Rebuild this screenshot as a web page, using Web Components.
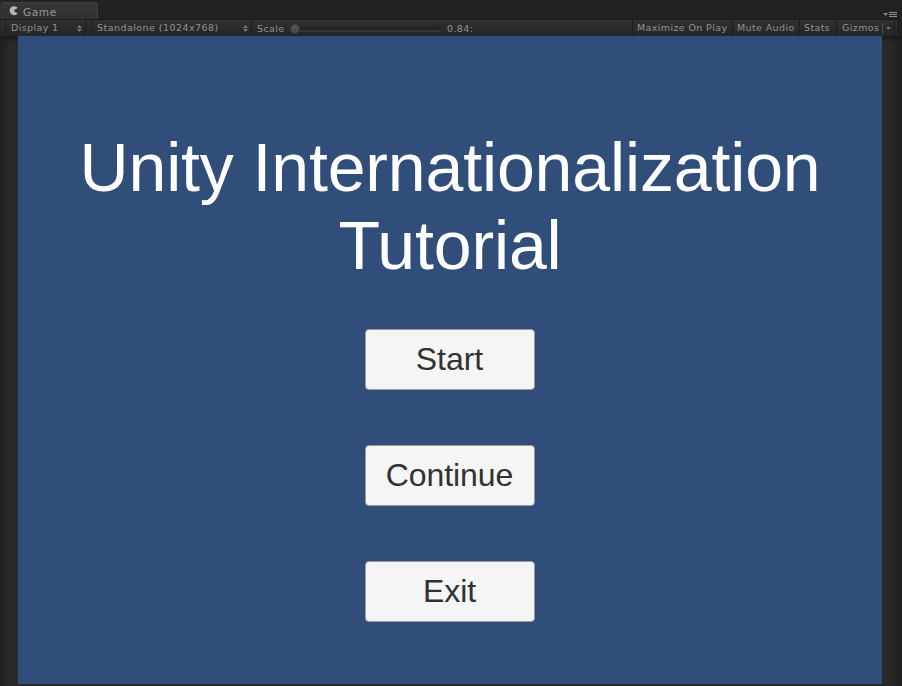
<!DOCTYPE html>
<html lang="en"><head><meta charset="utf-8"><title>Game</title>
<style>html,body{margin:0;height:100%;overflow:hidden;background:#222}</style></head>
<body><game-window></game-window>
<script>
const define = (name, html) => customElements.define(name, class extends HTMLElement {
  constructor() {
    super();
    const t = document.createElement('template');
    t.innerHTML = html;
    this.attachShadow({ mode: 'open' }).append(t.content.cloneNode(true));
  }
});

define('tool-cell', `<style>
:host{display:flex;box-sizing:border-box;height:16px;align-items:center;padding-left:5px;border-right:1px solid #1b1b1b;white-space:pre;flex:none}
span{line-height:16px}
</style><span><slot></slot></span><slot name="end"></slot>`);

define('scale-slider', `<style>
:host{display:flex;align-items:center;width:151px;height:16px;flex:none}
.knob{width:10px;height:10px;box-sizing:border-box;border-radius:50%;background:linear-gradient(#555,#484848);border:1px solid #3c3c3c;margin-top:2px;flex:none}
.track{flex:1;height:5px;box-sizing:border-box;margin-top:3px;border-radius:0 3px 3px 0;background:linear-gradient(#202020,#242424 50%,#343434 55%,#383838)}
</style><div class="knob"></div><div class="track"></div>`);

define('tab-strip', `<style>
:host{display:flex;height:19px;box-sizing:border-box;padding:2px 5px 0 0;background:#222;justify-content:space-between}
.tab{display:flex;box-sizing:border-box;width:98px;height:17px;padding-left:9px;background:linear-gradient(#363636,#303030);border:1px solid #414141;border-bottom:0;border-left-color:#303030;border-radius:4px 3px 0 0;color:#989898;font-size:10.5px;letter-spacing:.65px}
.tab svg{margin:3px 4px 0 -1px;flex:none}
.tab span{line-height:19px}
.menu{margin-top:9px;flex:none}
</style><div class="tab"><svg width="10" height="10"><path d="M8.8 2.1A4.5 4.5 0 1 0 8.8 7.3L5.4 5.7V3.7Z" fill="#b8b8b8"/></svg><span>Game</span></div>
<svg class="menu" width="14" height="7"><path d="M0 2H5L2.5 5Z" fill="#8a8a8a"/><path d="M6 1.5H14M6 3.5H14M6 5.5H14" stroke="#929292"/></svg>`);

define('tool-bar', `<style>
:host{display:flex;height:17px;box-sizing:border-box;border-top:1px solid #1b1b1b;background:linear-gradient(#303030,#252525);margin-right:3px;color:#929292;font-size:9.5px;letter-spacing:.38px}
.edge{box-sizing:border-box;width:6px;border-right:1px solid #1f1f1f}
.display{width:80px}.gap{box-sizing:border-box;width:6px;border-right:1px solid #1f1f1f}.aspect{width:160px;letter-spacing:.46px}
.updown{margin-left:auto;margin-right:3px;flex:none}
.label{line-height:18px;margin-left:5px;width:33px;flex:none;white-space:pre}
.value{line-height:18px;margin-left:6px;width:30px;flex:none}
.space{flex:1;border-right:1px solid #1b1b1b}
.arrow{margin-left:auto;margin-right:3px;padding-left:3px;border-left:1px solid #4a4a4a;height:12px;display:flex;align-items:center}
.tail{box-sizing:border-box;width:4px;border-right:1px solid #1b1b1b}
</style>
<div class="edge"></div>
<tool-cell class="display">Display 1<svg class="updown" slot="end" width="5" height="7"><path d="M0 3 2.5 0 5 3ZM0 4H5L2.5 7Z" fill="#757575"/></svg></tool-cell>
<div class="gap"></div>
<tool-cell class="aspect">Standalone (1024x768)<svg class="updown" slot="end" width="5" height="7"><path d="M0 3 2.5 0 5 3ZM0 4H5L2.5 7Z" fill="#757575"/></svg></tool-cell>
<span class="label">Scale</span><scale-slider></scale-slider><span class="value">0.84:</span>
<div class="space"></div>
<tool-cell style="width:100px;padding-left:4px">Maximize On Play</tool-cell>
<tool-cell style="width:67px;padding-left:4px">Mute Audio</tool-cell>
<tool-cell style="width:37px;padding-left:4px">Stats</tool-cell>
<tool-cell style="width:58px">Gizmos<div class="arrow" slot="end"><svg width="5" height="3"><path d="M0 0H5L2.5 3Z" fill="#707070"/></svg></div></tool-cell>
<div class="tail"></div>`);

define('menu-button', `<style>
:host{display:block}
button{display:block;box-sizing:border-box;width:170px;height:61px;padding:0 1px 0 0;border:1px solid #9a9a9a;border-radius:4px;background:#f5f5f5;color:#323232;font:32px/59px "Liberation Sans",Arial,sans-serif;letter-spacing:-.05px}
</style><button><slot></slot></button>`);

define('game-view', `<style>
:host{display:flex;flex:1;padding:0 20px 2px 18px;background:linear-gradient(#1b1b1b,transparent 7px),linear-gradient(90deg,#1f1f1f,#292929 10px,#292929 890px,#1f1f1f)}
main{flex:1;display:flex;flex-direction:column;align-items:center;background:#314d79}
h1{margin:92px 0 0;font:400 68px/78px "Liberation Sans",Arial,sans-serif;letter-spacing:-.14px;color:#fff;text-align:center;white-space:nowrap}
nav{display:flex;flex-direction:column;gap:54.6px;margin-top:45.4px}
</style><main><h1>Unity Internationalization<br>Tutorial</h1>
<nav><menu-button>Start</menu-button><menu-button>Continue</menu-button><menu-button>Exit</menu-button></nav></main>`);

define('game-window', `<style>
:host{display:flex;flex-direction:column;width:902px;height:686px;overflow:hidden;background:#222;font-family:"DejaVu Sans",sans-serif}
</style><tab-strip></tab-strip><tool-bar></tool-bar><game-view></game-view>`);
</script></body></html>
